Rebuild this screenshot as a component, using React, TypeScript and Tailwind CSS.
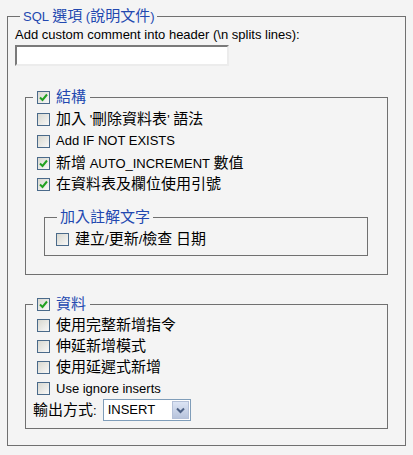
const T = ({ children }: { children: string }) => (
  <>
    {children.split(/([\u3000-\u9fff\uff00-\uffef]+)/).map((part, i) =>
      /[\u3000-\u9fff\uff00-\uffef]/.test(part) ? (
        <span key={i} className="text-[15px]">
          {part}
        </span>
      ) : (
        <span key={i}>{part}</span>
      )
    )}
  </>
);

const Box = ({ checked = false }: { checked?: boolean }) => (
  <span className="inline-flex w-[13px] h-[13px] shrink-0 items-center justify-center border border-[#4a6a8a] bg-gradient-to-br from-[#d8d8d0] to-[#f8f8f8]">
    {checked && (
      <svg width="9" height="9" viewBox="0 0 9 9">
        <path d="M1 4.5 L3.5 7 L8 1.5" fill="none" stroke="#21a121" strokeWidth="2" />
      </svg>
    )}
  </span>
);

const Row = ({ label, checked = false, h = "h-[22px]" }: { label: string; checked?: boolean; h?: string }) => (
  <label className={`flex items-center ${h}`}>
    <span className="ml-[4px] mr-[6px] flex">
      <Box checked={checked} />
    </span>
    <span>
      <T>{label}</T>
    </span>
  </label>
);

export default function App() {
  return (
    <div className="w-[413px] h-[455px] bg-[#f4f4f4] pt-[8px] text-[13px] leading-[16px] text-black font-['Liberation_Sans','Noto_Sans_CJK_TC',sans-serif]">
      <fieldset className="ml-[7px] w-[399px] h-[438px] border border-[#707070]">
        <legend className="ml-[12px] px-[3px] text-[#2248b0]">
          <T>SQL 選項 (說明文件)</T>
        </legend>
        <div className="px-[7px]">
          <div className="mt-[2px]">Add custom comment into header (\n splits lines):</div>
          <input
            type="text"
            className="mt-[2px] block w-[214px] h-[21px] bg-white border-2 border-t-[#7a7a7a] border-l-[#7a7a7a] border-b-[#ececec] border-r-[#ececec] outline-none"
          />

          <fieldset className="mt-[23px] mx-[10px] border border-[#707070] pb-[18px]">
            <legend className="ml-[7px]">
              <span className="flex items-center">
                <span className="ml-[4px] mr-[6px] flex">
                  <Box checked />
                </span>
                <span className="text-[#2248b0] pr-[4px]">
                  <T>結構</T>
                </span>
              </span>
            </legend>
            <div className="px-[7px] pt-[2px]">
              <Row label="加入 '刪除資料表' 語法" />
              <Row label="Add IF NOT EXISTS" />
              <Row label="新增 AUTO_INCREMENT 數值" checked />
              <Row label="在資料表及欄位使用引號" checked h="h-[20px]" />

              <fieldset className="mt-[15px] ml-[11px] w-[324px] border border-[#707070] pb-[5px]">
                <legend className="ml-[12px] px-[3px] text-[#2248b0]">
                  <T>加入註解文字</T>
                </legend>
                <div className="px-[7px] pt-[2px]">
                  <Row label="建立/更新/檢查 日期" />
                </div>
              </fieldset>
            </div>
          </fieldset>

          <fieldset className="mt-[21px] mx-[10px] border border-[#707070] pb-[7px]">
            <legend className="ml-[7px]">
              <span className="flex items-center">
                <span className="ml-[4px] mr-[6px] flex">
                  <Box checked />
                </span>
                <span className="text-[#2248b0] pr-[4px]">
                  <T>資料</T>
                </span>
              </span>
            </legend>
            <div className="px-[7px] pt-[2px]">
              <Row label="使用完整新增指令" h="h-[21px]" />
              <Row label="伸延新增模式" h="h-[21px]" />
              <Row label="使用延遲式新增" h="h-[21px]" />
              <Row label="Use ignore inserts" h="h-[21px]" />
              <div className="flex items-center h-[22px]">
                <span className="mr-[6px]">
                  <T>輸出方式:</T>
                </span>
                <div className="flex items-center w-[88px] h-[22px] border border-[#7f9db9] bg-white">
                  <span className="flex-1 pl-[4px]">INSERT</span>
                  <span className="flex items-center justify-center w-[17px] h-[18px] mr-[1px] border border-[#b4c0d8] bg-gradient-to-b from-[#dce4f4] to-[#b8c4dc]">
                    <svg width="9" height="7" viewBox="0 0 9 7">
                      <path d="M1 1.5 L4.5 5 L8 1.5" fill="none" stroke="#4d6185" strokeWidth="2" />
                    </svg>
                  </span>
                </div>
              </div>
            </div>
          </fieldset>
        </div>
      </fieldset>
    </div>
  );
}
